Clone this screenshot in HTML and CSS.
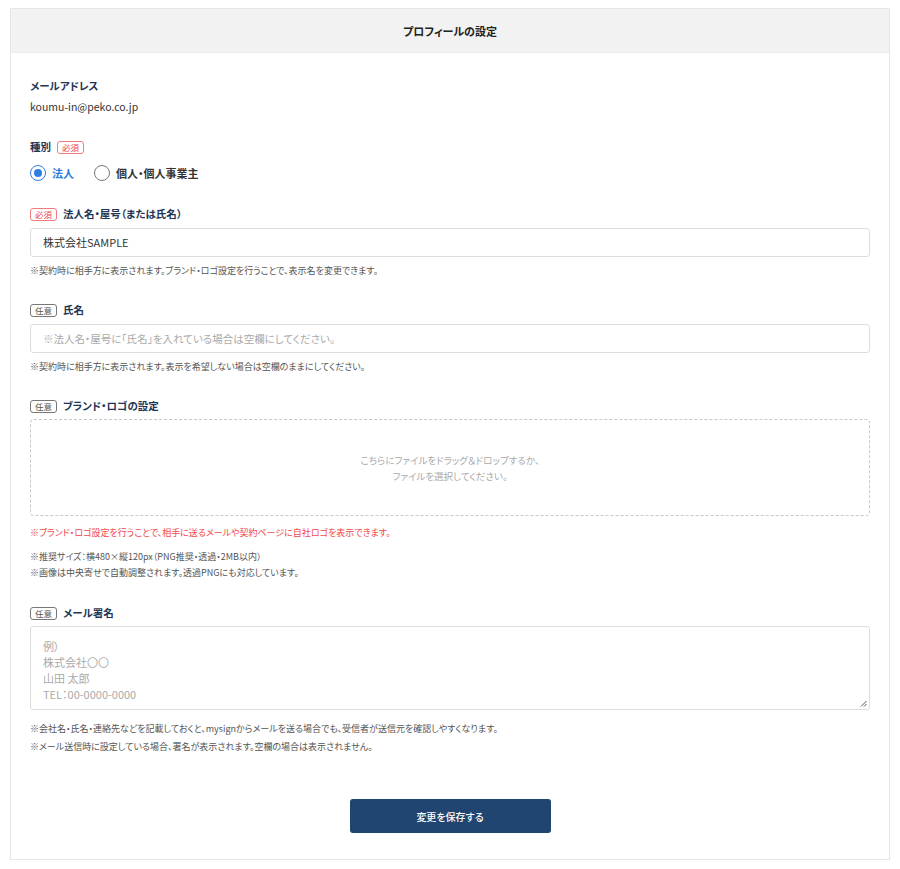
FILE: index.html
```html
<!DOCTYPE html>
<html lang="ja">
<head>
<meta charset="utf-8">
<link rel="stylesheet" href="styles.css">
</head>
<body>
<div class="card">
  <div class="card-header">プロフィールの設定</div>
  <div class="card-body">
    <div class="field first">
      <div class="label">メールアドレス</div>
      <div class="value">koumu-in@peko.co.jp</div>
    </div>

    <div class="field">
      <div class="label">種別 <span class="badge req">必須</span></div>
      <div class="radios">
        <label class="radio checked"><span class="circle"></span>法人</label>
        <label class="radio"><span class="circle"></span>個人・個人事業主</label>
      </div>
    </div>

    <div class="field">
      <div class="label"><span class="badge req">必須</span> 法人名・屋号（または氏名）</div>
      <div class="input">株式会社SAMPLE</div>
      <div class="hint">※契約時に相手方に表示されます。ブランド・ロゴ設定を行うことで、表示名を変更できます。</div>
    </div>

    <div class="field">
      <div class="label"><span class="badge opt">任意</span> 氏名</div>
      <div class="input placeholder">※法人名・屋号に「氏名」を入れている場合は空欄にしてください。</div>
      <div class="hint">※契約時に相手方に表示されます。表示を希望しない場合は空欄のままにしてください。</div>
    </div>

    <div class="field">
      <div class="label"><span class="badge opt">任意</span> ブランド・ロゴの設定</div>
      <div class="dropzone">こちらにファイルをドラッグ＆ドロップするか、<br>ファイルを選択してください。</div>
      <div class="hint red">※ブランド・ロゴ設定を行うことで、相手に送るメールや契約ページに自社ロゴを表示できます。</div>
      <div class="hint lines">※推奨サイズ：横480×縦120px（PNG推奨・透過・2MB以内）<br>※画像は中央寄せで自動調整されます。透過PNGにも対応しています。</div>
    </div>

    <div class="field">
      <div class="label"><span class="badge opt">任意</span> メール署名</div>
      <div class="textarea">例）<br>株式会社〇〇<br>山田 太郎<br>TEL：00-0000-0000
        <svg class="grip" width="7" height="7" viewBox="0 0 7 7"><path d="M6.5 1 L1 6.5 M6.5 4 L4 6.5" stroke="#555" stroke-width="1"/></svg>
      </div>
      <div class="hint sig">※会社名・氏名・連絡先などを記載しておくと、mysignからメールを送る場合でも、受信者が送信元を確認しやすくなります。</div>
      <div class="hint sig">※メール送信時に設定している場合、署名が表示されます。空欄の場合は表示されません。</div>
    </div>

    <div class="actions">
      <button class="save">変更を保存する</button>
    </div>
  </div>
</div>
</body>
</html>
```
FILE: styles.css
```css
* { box-sizing: border-box; }
body {
  margin: 0;
  background: #fff;
  font-family: "Noto Sans CJK JP", "Noto Sans", sans-serif;
  font-feature-settings: "palt";
  color: #333;
}
.card {
  margin: 8px 10px 0;
  width: 880px;
  border: 1px solid #e6e6e6;
  background: #fff;
}
.card-header {
  height: 44px;
  line-height: 44px;
  background: #f2f2f2;
  border-bottom: 1px solid #ececec;
  text-align: center;
  font-size: 11px;
  font-weight: 700;
  color: #222;
}
.card-body {
  padding: 25px 19px 26px;
}
.field { margin-top: 24px; }
.field.first { margin-top: 0; }
.label {
  font-size: 10.5px;
  font-weight: 700;
  line-height: 16px;
  color: #1e3555;
  display: flex;
  align-items: center;
  gap: 6px;
}
.value {
  margin-top: 5px;
  font-size: 10.5px;
  line-height: 16px;
  color: #333;
}
.badge {
  display: inline-block;
  font-size: 8.5px;
  font-weight: 400;
  line-height: 11px;
  padding: 0 4px;
  border-radius: 3px;
  border: 1px solid;
}
.badge.req { color: #f0484c; border-color: #f27b7e; }
.badge.opt { color: #555; border-color: #777; }
.radios {
  margin-top: 9px;
  display: flex;
  gap: 20px;
  height: 18px;
  align-items: center;
}
.radio {
  display: flex;
  align-items: center;
  gap: 6px;
  font-size: 11px;
  font-weight: 700;
  color: #333;
}
.radio .circle {
  width: 16px;
  height: 16px;
  border-radius: 50%;
  border: 1px solid #777;
  background: #fff;
  position: relative;
}
.radio.checked { color: #2d7fe0; }
.radio.checked .circle { border-color: #2d7fe0; }
.radio.checked .circle::after {
  content: "";
  position: absolute;
  left: 3px; top: 3px;
  width: 8px; height: 8px;
  border-radius: 50%;
  background: #2d7fe0;
}
.input {
  margin-top: 6px;
  height: 29px;
  border: 1px solid #dedede;
  border-radius: 3px;
  padding: 0 12px;
  line-height: 27px;
  font-size: 11px;
  color: #333;
}
.input.placeholder { color: #aaa; font-size: 10.5px; }
.hint {
  margin-top: 7px;
  font-size: 9px;
  line-height: 14px;
  color: #555;
}
.hint.red { color: #f0484c; margin-top: 10px; }
.hint.lines { margin-top: 9px; line-height: 16px; }
.hint.sig { margin-top: 4px; line-height: 14px; }
.textarea + .hint.sig { margin-top: 12px; }
.dropzone {
  margin-top: 5px;
  height: 97px;
  border: 1px dashed #c8c8c8;
  border-radius: 4px;
  display: flex;
  align-items: center;
  justify-content: center;
  text-align: center;
  font-size: 9.5px;
  line-height: 16px;
  color: #aaa;
}
.textarea {
  margin-top: 5px;
  height: 84px;
  border: 1px solid #dedede;
  border-radius: 3px;
  padding: 11px 12px 9px;
  font-size: 11px;
  line-height: 16px;
  color: #aaa;
  position: relative;
}
.grip { position: absolute; right: 2px; bottom: 2px; }
.actions {
  margin-top: 45px;
  display: flex;
  justify-content: center;
}
.save {
  width: 201px;
  height: 34px;
  border: none;
  border-radius: 3px;
  background: #1f4570;
  color: #fff;
  font-family: inherit;
  font-feature-settings: "palt";
  font-size: 10px;
  font-weight: 500;
  cursor: pointer;
}
```
